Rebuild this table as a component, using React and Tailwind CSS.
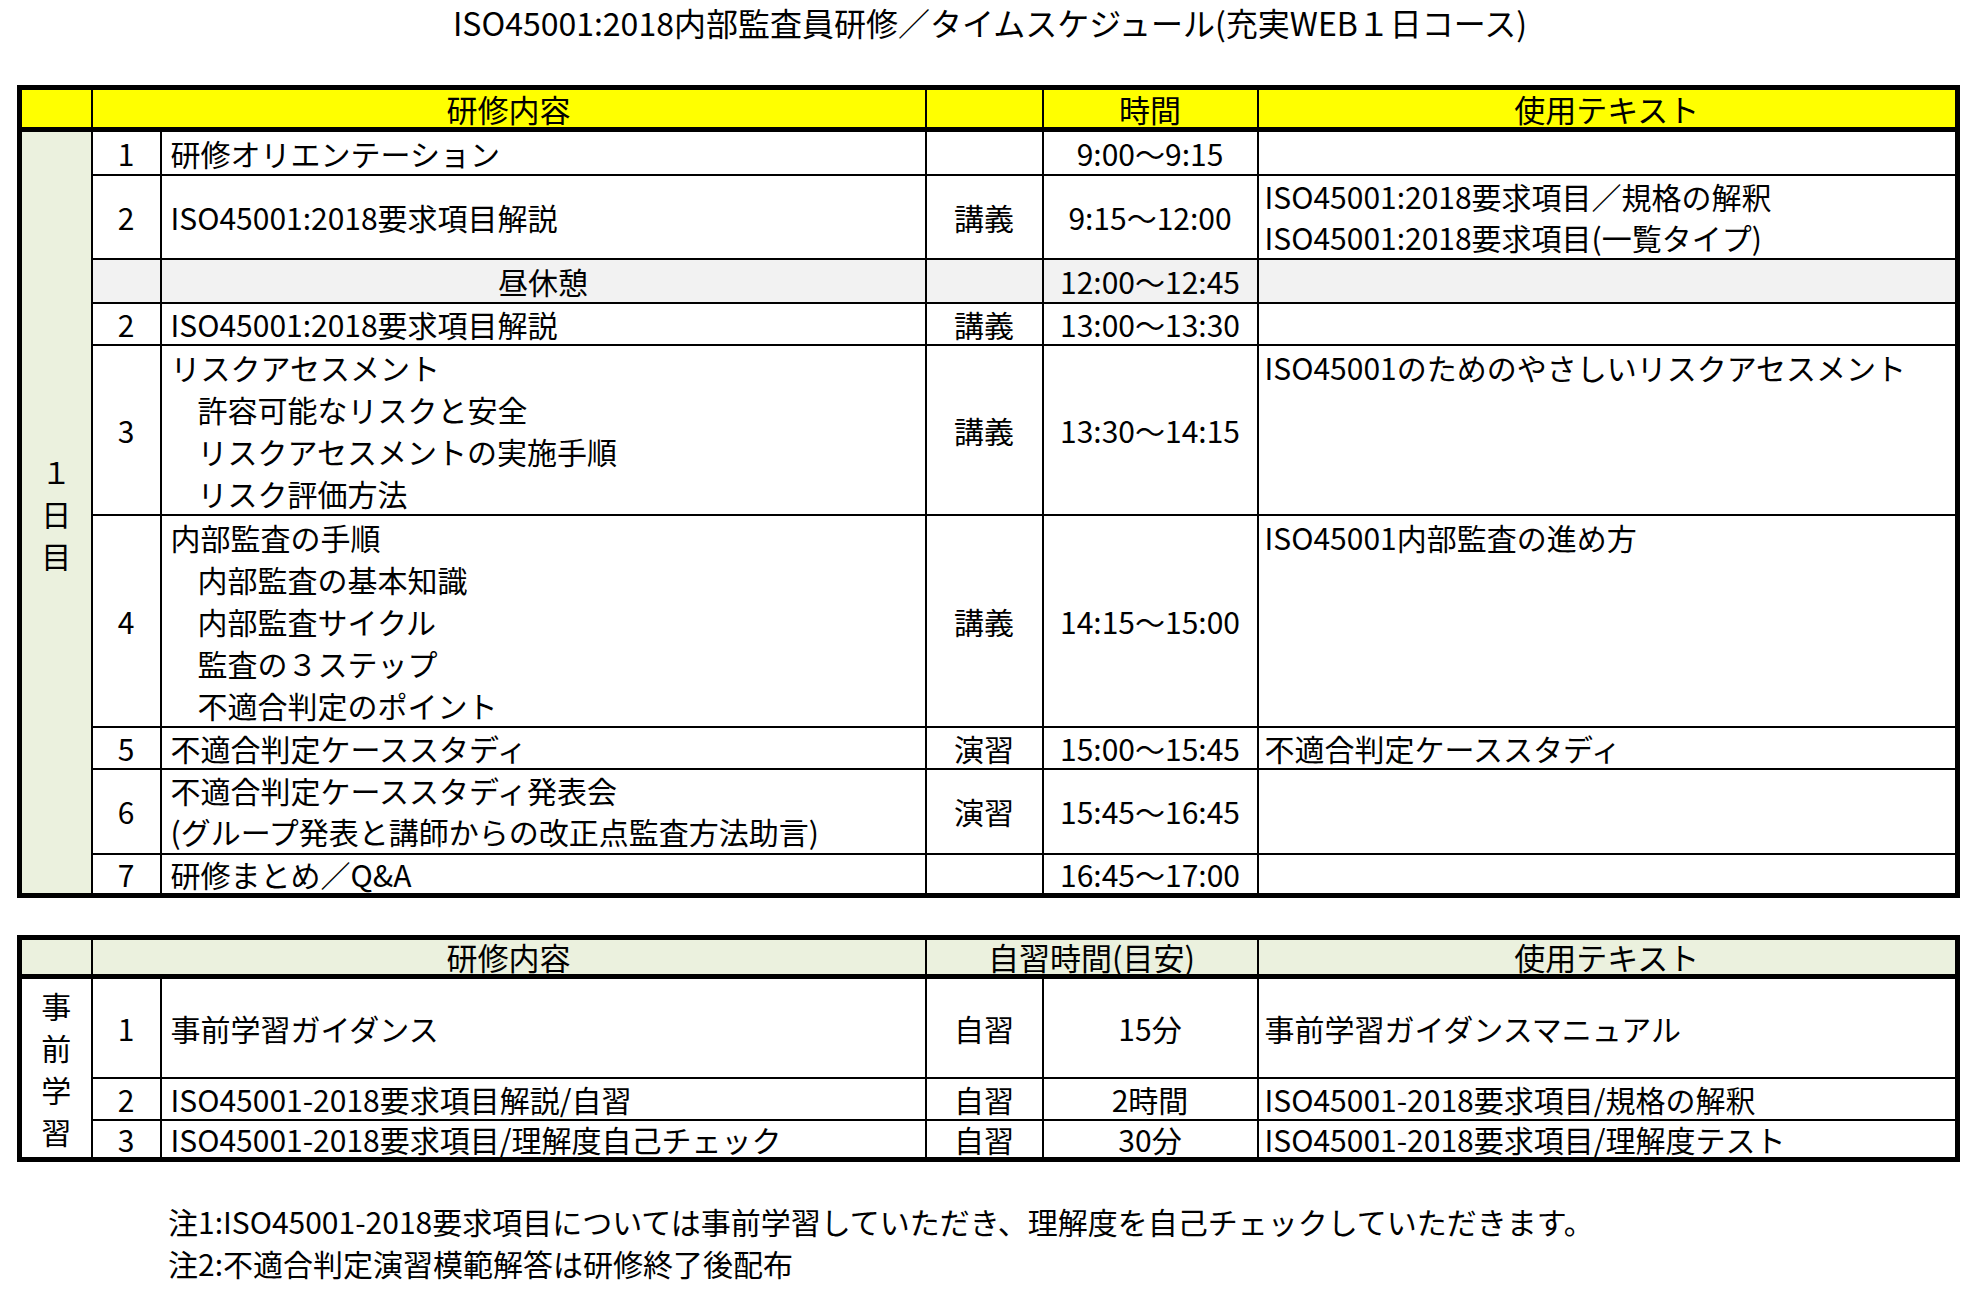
const day1 = [
  { no: '1', content: ['研修オリエンテーション'], type: '', time: '9:00～9:15', text: [], h: 'h-[45px]' },
  {
    no: '2',
    content: ['ISO45001:2018要求項目解説'],
    type: '講義',
    time: '9:15～12:00',
    text: ['ISO45001:2018要求項目／規格の解釈', 'ISO45001:2018要求項目(一覧タイプ)'],
    h: 'h-[84px]',
  },
  { lunch: true, time: '12:00～12:45', h: 'h-[44px]' },
  { no: '2', content: ['ISO45001:2018要求項目解説'], type: '講義', time: '13:00～13:30', text: [], h: 'h-[42px]' },
  {
    no: '3',
    content: ['リスクアセスメント', '*許容可能なリスクと安全', '*リスクアセスメントの実施手順', '*リスク評価方法'],
    type: '講義',
    time: '13:30～14:15',
    text: ['ISO45001のためのやさしいリスクアセスメント'],
    top: true,
    h: 'h-[170px]',
  },
  {
    no: '4',
    content: ['内部監査の手順', '*内部監査の基本知識', '*内部監査サイクル', '*監査の３ステップ', '*不適合判定のポイント'],
    type: '講義',
    time: '14:15～15:00',
    text: ['ISO45001内部監査の進め方'],
    top: true,
    h: 'h-[212px]',
  },
  { no: '5', content: ['不適合判定ケーススタディ'], type: '演習', time: '15:00～15:45', text: ['不適合判定ケーススタディ'], h: 'h-[42px]' },
  {
    no: '6',
    content: ['不適合判定ケーススタディ発表会', '(グループ発表と講師からの改正点監査方法助言)'],
    type: '演習',
    time: '15:45～16:45',
    text: [],
    h: 'h-[85px]',
  },
  { no: '7', content: ['研修まとめ／Q&A'], type: '', time: '16:45～17:00', text: [], h: 'h-[42px]' },
]

const prep = [
  { no: '1', content: '事前学習ガイダンス', time: '15分', text: '事前学習ガイダンスマニュアル', h: 'h-[101px]' },
  { no: '2', content: 'ISO45001-2018要求項目解説/自習', time: '2時間', text: 'ISO45001-2018要求項目/規格の解釈', h: 'h-[42px]' },
  { no: '3', content: 'ISO45001-2018要求項目/理解度自己チェック', time: '30分', text: 'ISO45001-2018要求項目/理解度テスト', h: 'h-[40px]' },
]

const cell = 'border-2 border-black p-0'
const head = 'border-2 border-b-[5px] border-black p-0 font-normal text-[31px] leading-[34px]'

// multi-line cells keep the sheet's 41-42px line pitch
function Lines({ lines }) {
  const lead = lines.length > 2 ? 'leading-[42px]' : lines.length === 2 ? 'leading-[41px]' : ''
  return (
    <div className={lead}>
      {lines.map((l, i) =>
        l.startsWith('*') ? (
          <div key={i} className="pl-[27px]">{l.slice(1)}</div>
        ) : (
          <div key={i}>{l}</div>
        )
      )}
    </div>
  )
}

function Cols() {
  return (
    <colgroup>
      <col className="w-[72px]" />
      <col className="w-[69px]" />
      <col className="w-[765px]" />
      <col className="w-[117px]" />
      <col className="w-[215px]" />
      <col />
    </colgroup>
  )
}

function VerticalLabel({ chars }) {
  return (
    <div className="flex flex-col items-center">
      {chars.map((c, i) => (
        <span key={i} className="leading-[42px]">{c}</span>
      ))}
    </div>
  )
}

export default function App() {
  return (
    <div className="h-[1296px] w-[1980px] bg-white text-black font-['Noto_Sans_CJK_JP',sans-serif] text-[30px] leading-[36px]">
      <div className="h-[85px] pt-[2px] text-center text-[32px] leading-[40px]">
        ISO45001:2018内部監査員研修／タイムスケジュール(充実WEB１日コース)
      </div>

      <table className="ml-[17px] w-[1943px] table-fixed border-collapse border-[5px] border-black">
        <Cols />
        <thead>
          <tr className="h-[42px] bg-[#ffff00]">
            <th className={head}></th>
            <th className={head} colSpan={2}>研修内容</th>
            <th className={head}></th>
            <th className={head}>時間</th>
            <th className={head}>使用テキスト</th>
          </tr>
        </thead>
        <tbody>
          {day1.map((r, i) => (
            <tr key={i} className={`${r.h} ${r.lunch ? 'bg-[#f2f2f2]' : ''}`}>
              {i === 0 && (
                <td rowSpan={day1.length} className={`${cell} bg-[#ebf1de] text-center`}>
                  <VerticalLabel chars={['１', '日', '目']} />
                </td>
              )}
              {r.lunch ? (
                <>
                  <td className={cell}></td>
                  <td className={`${cell} text-center`}>昼休憩</td>
                  <td className={cell}></td>
                  <td className={`${cell} text-center`}>{r.time}</td>
                  <td className={cell}></td>
                </>
              ) : (
                <>
                  <td className={`${cell} text-center`}>{r.no}</td>
                  <td className={`${cell} pl-[9px] ${r.top ? 'align-top' : ''}`}>
                    <Lines lines={r.content} />
                  </td>
                  <td className={`${cell} text-center`}>{r.type}</td>
                  <td className={`${cell} text-center`}>{r.time}</td>
                  <td className={`${cell} pl-[6px] ${r.top ? 'align-top pt-[3px]' : ''}`}>
                    <Lines lines={r.text} />
                  </td>
                </>
              )}
            </tr>
          ))}
        </tbody>
      </table>

      <table className="ml-[17px] mt-[37px] w-[1943px] table-fixed border-collapse border-[5px] border-black">
        <Cols />
        <thead>
          <tr className="h-[38px] bg-[#ebf1de]">
            <th className={head}></th>
            <th className={head} colSpan={2}>研修内容</th>
            <th className={head} colSpan={2}>自習時間(目安)</th>
            <th className={head}>使用テキスト</th>
          </tr>
        </thead>
        <tbody>
          {prep.map((r, i) => (
            <tr key={i} className={r.h}>
              {i === 0 && (
                <td rowSpan={prep.length} className={`${cell} text-center`}>
                  <VerticalLabel chars={['事', '前', '学', '習']} />
                </td>
              )}
              <td className={`${cell} text-center`}>{r.no}</td>
              <td className={`${cell} pl-[9px]`}>{r.content}</td>
              <td className={`${cell} text-center`}>自習</td>
              <td className={`${cell} text-center`}>{r.time}</td>
              <td className={`${cell} pl-[6px]`}>{r.text}</td>
            </tr>
          ))}
        </tbody>
      </table>

      <div className="mt-[38px] pl-[168px] leading-[42px]">
        <div>注1:ISO45001-2018要求項目については事前学習していただき、理解度を自己チェックしていただきます。</div>
        <div>注2:不適合判定演習模範解答は研修終了後配布</div>
      </div>
    </div>
  )
}
